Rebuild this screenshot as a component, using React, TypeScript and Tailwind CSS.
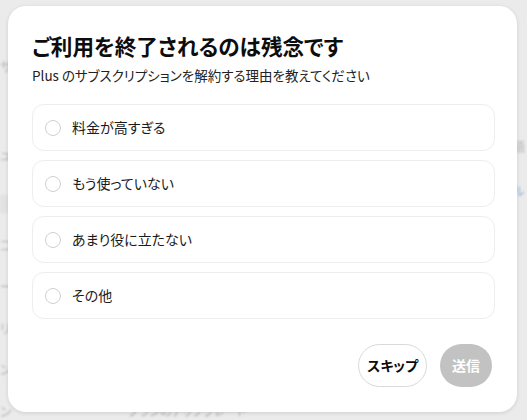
import { useState } from "react"

const REASONS = ["料金が高すぎる", "もう使っていない", "あまり役に立たない", "その他"]

const FONT = "font-['Noto_Sans_CJK_JP','Noto_Sans',sans-serif] [font-feature-settings:'palt']"

function Backdrop() {
  // ぼかされた背後のページ
  return (
    <div className="flex h-full w-full blur-[1px]">
      <div className="flex w-[20px] flex-col gap-[22px] pt-[56px] text-[13px] text-[#b5b5b5]">
        <span>サ</span>
        <span className="mt-[46px]">ュ</span>
        <span className="mt-[10px] h-[30px] bg-[#e2e2e2]" />
        <span>コ</span>
        <span>ー</span>
        <span>リ</span>
        <span>ン</span>
        <span>ン</span>
      </div>
      <div className="flex flex-1 flex-col">
        <div className="mt-[84px] h-px bg-[#e0e0e0]" />
        <div className="mt-auto ml-[108px] text-[12px] text-[#b0b0b0]">プランのアップグレード</div>
      </div>
      <div className="flex w-[14px] flex-col pt-[138px] text-[12px]">
        <span className="text-[#b5b5b5]">語</span>
        <span className="mt-[26px] text-[#8fb3d9]">ル</span>
      </div>
    </div>
  )
}

export default function App() {
  const [picked, setPicked] = useState<string | null>(null)
  return (
    <div className={`relative h-[420px] w-[527px] overflow-hidden bg-[#ebebeb] ${FONT}`}>
      <Backdrop />
      <div className="absolute left-[8px] top-[6px] flex h-[406px] w-[509px] flex-col rounded-[18px] bg-white px-[24px] pt-[24px] shadow-[0_1px_4px_rgba(0,0,0,0.12)]">
        <h1 className="text-[21.6px] font-bold leading-[32px] text-[#0d0d0d]">ご利用を終了されるのは残念です</h1>
        <p className="mt-[3px] text-[13.5px] leading-[20px] text-[#222]">Plus のサブスクリプションを解約する理由を教えてください</p>
        <div className="mt-[19px] flex flex-col gap-[9px]">
          {REASONS.map((r) => (
            <button
              key={r}
              onClick={() => setPicked(r)}
              className="flex h-[47px] w-[463px] items-center gap-[11px] rounded-[12px] border border-[#ededed] px-[12px] text-left"
            >
              <span
                className={`size-[16px] rounded-full border ${
                  picked === r ? "border-[5px] border-black" : "border-[#d0d0d0]"
                }`}
              />
              <span className="text-[14px] text-[#1a1a1a]">{r}</span>
            </button>
          ))}
        </div>
        <div className="mt-[25px] flex justify-end gap-[13px] pr-[1px]">
          <button className="h-[43px] rounded-full border border-[#d9d9d9] px-[8px] text-[14px] font-bold text-[#0d0d0d]">
            スキップ
          </button>
          <button
            disabled={!picked}
            className="h-[43px] rounded-full bg-[#c2c2c2] px-[12px] text-[14px] font-bold text-white"
          >
            送信
          </button>
        </div>
      </div>
    </div>
  )
}
